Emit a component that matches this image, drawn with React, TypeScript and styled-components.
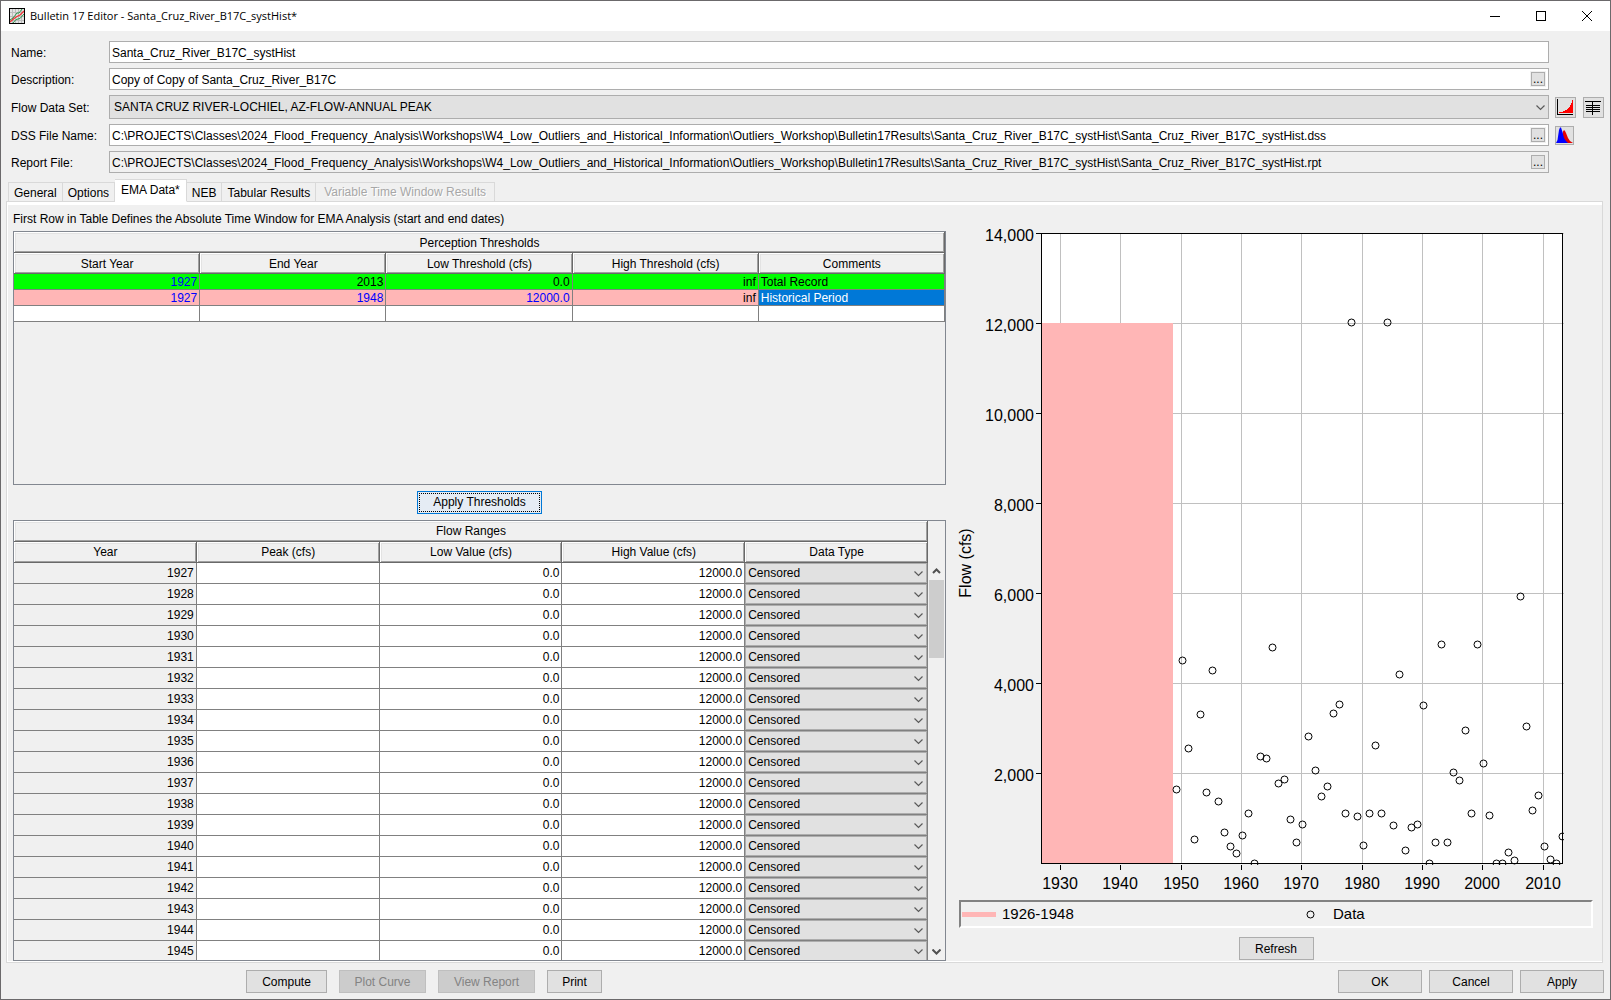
import React, { useLayoutEffect, useRef, useState } from "react";
import styled, { createGlobalStyle, css } from "styled-components";

const face = "#f0f0f0";
const edge = "#828790";
const grid = "#808080";
const btnEdge = "#adadad";
const btnFace = "#e1e1e1";
const pink = "#ffb6b6";
const sans = '"Liberation Sans", Arial, sans-serif';

const GlobalStyle = createGlobalStyle`
  * { box-sizing: border-box; }
  body { margin: 0; background: ${face}; font: 12px/16px ${sans}; color: #000; }
  button, input, select { font: inherit; color: inherit; margin: 0; border-radius: 0; }
  svg { display: block; }
`;

const Window = styled.main`
  display: flex;
  flex-direction: column;
  height: 100vh;
  min-height: 700px;
  min-width: 1100px;
  border: 1px solid #6b696b;
  background: ${face};
`;

const TitleBar = styled.header`
  display: flex;
  align-items: center;
  height: 30px;
  padding-left: 8px;
  background: #fff;
`;

const Title = styled.h1`
  flex: 1;
  margin: 0 0 0 5px;
  font: 400 11px/16px "Open Sans", "Noto Sans", sans-serif;
`;

const CaptionButton = styled.button`
  display: grid;
  place-items: center;
  width: 46px;
  height: 28px;
  padding: 0;
  border: 0;
  background: none;
`;

const Form = styled.form`
  display: flex;
  flex-direction: column;
  gap: 5px;
  padding: 10px 6px 0 10px;
`;

const FormRow = styled.div`
  display: grid;
  grid-template-columns: 98px minmax(0, 1fr) 55px;
  align-items: center;
`;

const Label = styled.label`
  padding-top: 2px;
`;

const Field = styled.div<{ $muted?: boolean }>`
  display: flex;
  align-items: center;
  height: 22px;
  padding-right: 3px;
  border: 1px solid ${btnEdge};
  background: ${(p) => (p.$muted ? face : "#fff")};
`;

const FieldInput = styled.input`
  flex: 1;
  min-width: 0;
  height: 20px;
  padding: 2px 2px 0;
  border: 0;
  outline: 0;
  background: transparent;
`;

const Browse = styled.button`
  width: 14px;
  height: 14px;
  padding: 0;
  border: 1px solid ${btnEdge};
  background: ${btnFace};
  outline: 1px solid ${face};
  line-height: 12px;
`;

const SelectBox = styled.div<{ $height: number }>`
  position: relative;
  height: ${(p) => p.$height}px;
  color: #5a5a5a;

  > svg {
    position: absolute;
    right: 4px;
    top: calc(50% - 2px);
    pointer-events: none;
  }
`;

const Select = styled.select<{ $inset: number }>`
  appearance: none;
  display: block;
  width: 100%;
  height: 100%;
  padding: 0 16px 0 ${(p) => p.$inset}px;
  border: 1px solid ${btnEdge};
  background: ${btnFace};
  color: #000;
`;

const IconRow = styled.div`
  display: flex;
  justify-content: space-between;
  align-items: center;
  padding-left: 6px;
`;

const IconButton = styled.button<{ $size: number }>`
  display: grid;
  place-items: center;
  width: ${(p) => p.$size}px;
  height: ${(p) => p.$size}px;
  padding: 0;
  border: 1px solid ${btnEdge};
  background: ${btnFace};
`;

const Tabs = styled.div`
  display: flex;
  align-items: flex-end;
  margin: 6px 0 -1px 7px;
  z-index: 1;
`;

const Tab = styled.button`
  height: 20px;
  padding: 2px 5px 0;
  border: 1px solid #d9d9d9;
  border-left-width: 0;
  background: ${face};
  line-height: 16px;

  &:first-child {
    border-left-width: 1px;
  }

  &[aria-selected="true"] {
    height: 23px;
    padding: 0 6px 2px;
    border-bottom-color: #fff;
    background: #fff;
  }

  &:disabled {
    padding: 0 8px;
    color: #a7a7a7;
    text-shadow: 1px 1px #fff;
  }
`;

const Panel = styled.section`
  flex: 1;
  min-height: 0;
  display: grid;
  grid-template-columns: minmax(0, 933fr) minmax(0, 634fr);
  grid-template-rows: minmax(0, 1fr);
  column-gap: 13px;
  margin: 0 7px 0 5px;
  padding: 8px 9px 1px 6px;
  border: 1px solid #d9d9d9;
  box-shadow: inset 0 3px #fff, inset 1px -1px #fff;
`;

const Column = styled.div`
  display: flex;
  flex-direction: column;
  min-height: 0;
`;

const Hint = styled.p`
  margin: 0;
  padding: 1px 0 4px;
  white-space: nowrap;
`;

const TableFrame = styled.div<{ $grow: number }>`
  flex: ${(p) => p.$grow} 1 0px;
  display: flex;
  min-height: 0;
  overflow: hidden;
  border: 1px solid ${edge};
`;

const TableArea = styled.div`
  flex: 1;
  min-width: 0;
`;

const Table = styled.table`
  width: 100%;
  table-layout: fixed;
  border-collapse: separate;
  border-spacing: 0;
`;

const HeadCell = styled.th`
  height: 21px;
  padding: 0;
  font-weight: 400;
  line-height: 16px;
  box-shadow: inset -1px -1px #696969, inset 1px 1px #fff, inset -2px -2px #a0a0a0, inset 2px 2px #e3e3e3;
`;

type Tone = "white" | "face" | "green" | "pink" | "selected";
const tones: Record<Tone, string> = {
  white: "#fff",
  face,
  green: "#00ff00",
  pink,
  selected: "#0078d7",
};

const Cell = styled.td<{ $tone?: Tone; $left?: boolean; $edited?: boolean; $tall?: boolean }>`
  height: ${(p) => (p.$tall ? 21 : 16)}px;
  padding: 2px 2px 0;
  border: solid ${grid};
  border-width: 0 1px 1px 0;
  background: ${(p) => tones[p.$tone ?? "white"]};
  color: ${(p) => (p.$tone === "selected" ? "#fff" : p.$edited ? "#0000ff" : "#000")};
  text-align: ${(p) => (p.$left ? "left" : "right")};
  line-height: 13px;
`;

const SelectCell = styled.td`
  height: 21px;
  padding: 0;
  border: solid ${grid};
  border-width: 0 1px 1px 0;
`;

const ScrollColumn = styled.div`
  display: flex;
  flex-direction: column;
  align-items: center;
  width: 17px;
  padding-top: 42px;
  color: #505050;
`;

const ScrollArrow = styled.button`
  display: grid;
  place-items: center;
  width: 17px;
  height: 17px;
  padding: 0;
  border: 0;
  background: ${face};
`;

const ScrollTrack = styled.div`
  flex: 1;
  width: 15px;
`;

const ScrollThumb = styled.div`
  height: 78px;
  background: #cdcdcd;
`;

const pushButton = css`
  height: 23px;
  padding: 0;
  border: 1px solid ${btnEdge};
  background: ${btnFace};
`;

const PushButton = styled.button<{ $width: number }>`
  ${pushButton}
  width: ${(p) => p.$width}px;

  &:disabled {
    border-color: #bfbfbf;
    background: #cccccc;
    color: #838383;
  }
`;

const DefaultButton = styled.button`
  ${pushButton}
  align-self: center;
  width: 125px;
  margin: 6px 0;
  border-color: #0078d7;
  background: #e5ecf4;
  outline: 1px dotted #000;
  outline-offset: -3px;
`;

const ChartArea = styled.div`
  flex: 1;
  min-height: 0;

  > svg {
    overflow: visible;
  }
`;

const Legend = styled.div`
  display: grid;
  grid-template-columns: 1fr 1fr;
  align-items: center;
  height: 28px;
  margin-bottom: 9px;
  border: 2px solid;
  border-color: #828282 #fff #fff #828282;
  font-size: 15px;
  line-height: 20px;
`;

const LegendItem = styled.div<{ $gap: number }>`
  display: flex;
  align-items: center;
  gap: ${(p) => p.$gap}px;
  padding-left: 1px;
`;

const Swatch = styled.span`
  width: 34px;
  height: 5px;
  background: ${pink};
`;

const RefreshRow = styled.div`
  display: flex;
  justify-content: center;
  padding-bottom: 1px;
`;

const Footer = styled.footer`
  display: flex;
  justify-content: space-between;
  padding: 7px 6px 6px 245px;
`;

const ButtonGroup = styled.div<{ $gap: number }>`
  display: flex;
  gap: ${(p) => p.$gap}px;
`;

const Chevron = ({ up = false, bold = false }: { up?: boolean; bold?: boolean }) => (
  <svg width="9" height="6" viewBox="0 0 9 6" fill="none" stroke="currentColor" strokeWidth={bold ? 2 : 1.2} aria-hidden="true">
    <path d={up ? "M1 5 4.500 1.500 8 5" : "M.5.5 4.500 4.500 8.500.5"} />
  </svg>
);

const AppIcon = () => (
  <svg width="16" height="16" viewBox="0 0 16 16" aria-hidden="true">
    <rect width="16" height="16" fill="#e4e4e4" />
    <path d="M3.500 1v14M6.500 1v14M9.500 1v14M12.500 1v14M1 4.500h14M1 8.500h14M1 12.500h14" stroke="#bdbdbd" fill="none" />
    <path d="M1 12 4 10 8 5 10 5 13 1M4 15 7 11.500 11 10.500 15 6" stroke="#28964b" fill="none" />
    <path d="M1 14 5 10.500 8 8.500 11 7 15 3" stroke="#f03434" strokeWidth="1.300" fill="none" />
    <rect x=".5" y=".5" width="15" height="15" fill="none" stroke="#000" />
  </svg>
);

const PlotIcon = () => (
  <svg width="19" height="19" viewBox="0 0 19 19" shapeRendering="crispEdges" aria-hidden="true">
    <path d="M3 14h4v-1h2v-1h2v-1h1v-1h1V9h1V7h1V5h1V2h1v13H3z" fill="#f00" />
    <path d="M1.500 1v15.500H17" fill="none" stroke="#000" />
  </svg>
);

const TableIcon = () => (
  <svg width="19" height="19" viewBox="0 0 19 19" shapeRendering="crispEdges" aria-hidden="true">
    <path d="M1 3.500h16M2 7.500h14M2 9.500h14M2 11.500h14M2 13.500h14M8.500 3v14" fill="none" stroke="#000" />
  </svg>
);

const HydrographIcon = () => (
  <svg width="17" height="17" viewBox="0 0 17 17" aria-hidden="true">
    <path d="M5 16 7 4.500 8 3l1 1 1 2 2 5 2 3 3 2z" fill="#e60000" />
    <path d="M0 16 1.500 13 3 3 4 .5 5 .5 6.500 5 8 11l2 3 2 2z" fill="#0000ff" />
  </svg>
);

const flows: number[] = [
  1651, 4517, 2562, 540, 3318, 1569, 4295, 1369, 695, 384, 229, 629, 1118, 0, 2384, 2340, 4806, 1784, 1873, 984, 473,
  873, 2829, 2073, 1495, 1718, 3340, 3540, 1118, 12012, 1051, 407, 1118, 2629, 1118, 12012, 851, 4206, 296, 807, 873,
  3518, 0, 473, 4873, 473, 2029, 1851, 2962, 1118, 4873, 2229, 1073, 0, 0, 251, 73, 5940, 3051, 1184, 1518, 384, 96,
  0, 607,
];
const firstYear = 1949;

function FlowChart() {
  const host = useRef<HTMLDivElement>(null);
  const [size, setSize] = useState({ w: 634, h: 690 });

  useLayoutEffect(() => {
    const el = host.current!;
    const measure = () => setSize({ w: el.clientWidth, h: el.clientHeight });
    measure();
    const observer = new ResizeObserver(measure);
    observer.observe(el);
    return () => observer.disconnect();
  }, []);

  const left = 82;
  const right = size.w - 31;
  const top = 23;
  const bottom = size.h - 37;
  const x = (year: number) => left + ((year - 1926.85) / 86.35) * (right - left);
  const y = (flow: number) => bottom - (flow / 14000) * (bottom - top);
  const snap = (v: number) => Math.round(v) + 0.5;
  const decades = [1930, 1940, 1950, 1960, 1970, 1980, 1990, 2000, 2010];
  const levels = [2000, 4000, 6000, 8000, 10000, 12000, 14000];
  const middle = (top + bottom) / 2 + 15;

  return (
    <ChartArea ref={host}>
      <svg width={size.w} height={size.h} fontFamily={sans} fontSize="16" role="img" aria-label="Annual peak flow by year">
        <clipPath id="plot">
          <rect x={left} y={top} width={right - left + 2} height={bottom - top + 2} />
        </clipPath>
        <rect x={left} y={top} width={right - left} height={bottom - top} fill="#fff" />
        {decades.map((d) => (
          <g key={d}>
            <path d={`M${snap(x(d))} ${top}V${bottom}`} stroke="#c0c0c0" />
            <path d={`M${snap(x(d))} ${bottom + 2}v5`} stroke="#000" />
            <text x={Math.round(x(d))} y={bottom + 26} textAnchor="middle">{d}</text>
          </g>
        ))}
        {levels.map((l) => (
          <g key={l}>
            <path d={`M${left} ${snap(y(l))}H${right + 2}`} stroke="#c0c0c0" />
            <path d={`M${left - 5} ${snap(y(l))}h5`} stroke="#000" />
            <text x={left - 7} y={Math.round(y(l)) + 8} textAnchor="end">{l.toLocaleString("en-US")}</text>
          </g>
        ))}
        <rect x={left} y={Math.round(y(12000))} width={Math.round(x(1948.65)) - left} height={bottom - Math.round(y(12000))} fill={pink} />
        <rect x={left + 0.5} y={top + 0.5} width={right - left} height={bottom - top} fill="none" stroke="#000" />
        <g clipPath="url(#plot)" fill="none" stroke="#000">
          {flows.map((f, i) => (
            <circle key={i} cx={snap(x(firstYear + i + 0.18))} cy={snap(y(f))} r="3.500" />
          ))}
        </g>
        <text transform={`translate(12 ${middle}) rotate(-90)`} textAnchor="middle">Flow (cfs)</text>
      </svg>
    </ChartArea>
  );
}

const years = Array.from({ length: 19 }, (_, i) => 1927 + i);

export default function App() {
  return (
    <>
      <GlobalStyle />
      <Window>
        <TitleBar>
          <AppIcon />
          <Title>Bulletin 17 Editor - Santa_Cruz_River_B17C_systHist*</Title>
          <CaptionButton aria-label="Minimize">
            <svg width="10" height="10"><path d="M0 5.500h10" stroke="#000" /></svg>
          </CaptionButton>
          <CaptionButton aria-label="Maximize">
            <svg width="10" height="10"><rect x=".5" y=".5" width="9" height="9" fill="none" stroke="#000" /></svg>
          </CaptionButton>
          <CaptionButton aria-label="Close">
            <svg width="10" height="10"><path d="M0 0 10 10M10 0 0 10" stroke="#000" /></svg>
          </CaptionButton>
        </TitleBar>

        <Form onSubmit={(e) => e.preventDefault()}>
          <FormRow>
            <Label htmlFor="name">Name:</Label>
            <Field><FieldInput id="name" defaultValue="Santa_Cruz_River_B17C_systHist" /></Field>
          </FormRow>
          <FormRow>
            <Label htmlFor="description">Description:</Label>
            <Field>
              <FieldInput id="description" defaultValue="Copy of Copy of Santa_Cruz_River_B17C" />
              <Browse type="button" aria-label="Edit description">...</Browse>
            </Field>
          </FormRow>
          <FormRow>
            <Label htmlFor="dataset">Flow Data Set:</Label>
            <SelectBox $height={24}>
              <Select id="dataset" $inset={4}>
                <option>SANTA CRUZ RIVER-LOCHIEL, AZ-FLOW-ANNUAL PEAK</option>
              </Select>
              <Chevron />
            </SelectBox>
            <IconRow>
              <IconButton type="button" $size={21} aria-label="Plot data set"><PlotIcon /></IconButton>
              <IconButton type="button" $size={21} aria-label="Tabulate data set"><TableIcon /></IconButton>
            </IconRow>
          </FormRow>
          <FormRow>
            <Label htmlFor="dss">DSS File Name:</Label>
            <Field>
              <FieldInput
                id="dss"
                defaultValue="C:\PROJECTS\Classes\2024_Flood_Frequency_Analysis\Workshops\W4_Low_Outliers_and_Historical_Information\Outliers_Workshop\Bulletin17Results\Santa_Cruz_River_B17C_systHist\Santa_Cruz_River_B17C_systHist.dss"
              />
              <Browse type="button" aria-label="Browse DSS file">...</Browse>
            </Field>
            <IconRow>
              <IconButton type="button" $size={19} aria-label="Plot results"><HydrographIcon /></IconButton>
            </IconRow>
          </FormRow>
          <FormRow>
            <Label htmlFor="report">Report File:</Label>
            <Field $muted>
              <FieldInput
                id="report"
                readOnly
                defaultValue="C:\PROJECTS\Classes\2024_Flood_Frequency_Analysis\Workshops\W4_Low_Outliers_and_Historical_Information\Outliers_Workshop\Bulletin17Results\Santa_Cruz_River_B17C_systHist\Santa_Cruz_River_B17C_systHist.rpt"
              />
              <Browse type="button" aria-label="Browse report file">...</Browse>
            </Field>
          </FormRow>
        </Form>

        <Tabs role="tablist">
          <Tab role="tab" aria-selected="false">General</Tab>
          <Tab role="tab" aria-selected="false">Options</Tab>
          <Tab role="tab" aria-selected="true">EMA Data*</Tab>
          <Tab role="tab" aria-selected="false">NEB</Tab>
          <Tab role="tab" aria-selected="false">Tabular Results</Tab>
          <Tab role="tab" aria-selected="false" disabled>Variable Time Window Results</Tab>
        </Tabs>

        <Panel role="tabpanel">
          <Column>
            <Hint>First Row in Table Defines the Absolute Time Window for EMA Analysis (start and end dates)</Hint>
            <TableFrame $grow={253}>
              <TableArea>
                <Table>
                  <thead>
                    <tr><HeadCell colSpan={5}>Perception Thresholds</HeadCell></tr>
                    <tr>
                      <HeadCell>Start Year</HeadCell>
                      <HeadCell>End Year</HeadCell>
                      <HeadCell>Low Threshold (cfs)</HeadCell>
                      <HeadCell>High Threshold (cfs)</HeadCell>
                      <HeadCell>Comments</HeadCell>
                    </tr>
                  </thead>
                  <tbody>
                    <tr>
                      <Cell $tone="green" $edited>1927</Cell>
                      <Cell $tone="green">2013</Cell>
                      <Cell $tone="green">0.0</Cell>
                      <Cell $tone="green">inf</Cell>
                      <Cell $tone="green" $left>Total Record</Cell>
                    </tr>
                    <tr>
                      <Cell $tone="pink" $edited>1927</Cell>
                      <Cell $tone="pink" $edited>1948</Cell>
                      <Cell $tone="pink" $edited>12000.0</Cell>
                      <Cell $tone="pink">inf</Cell>
                      <Cell $tone="selected" $left>Historical Period</Cell>
                    </tr>
                    <tr>
                      <Cell /><Cell /><Cell /><Cell /><Cell />
                    </tr>
                  </tbody>
                </Table>
              </TableArea>
            </TableFrame>
            <DefaultButton type="button">Apply Thresholds</DefaultButton>
            <TableFrame $grow={442}>
              <TableArea>
                <Table>
                  <thead>
                    <tr><HeadCell colSpan={5}>Flow Ranges</HeadCell></tr>
                    <tr>
                      <HeadCell>Year</HeadCell>
                      <HeadCell>Peak (cfs)</HeadCell>
                      <HeadCell>Low Value (cfs)</HeadCell>
                      <HeadCell>High Value (cfs)</HeadCell>
                      <HeadCell>Data Type</HeadCell>
                    </tr>
                  </thead>
                  <tbody>
                    {years.map((year) => (
                      <tr key={year}>
                        <Cell $tall $tone="face">{year}</Cell>
                        <Cell $tall />
                        <Cell $tall>0.0</Cell>
                        <Cell $tall>12000.0</Cell>
                        <SelectCell>
                          <SelectBox $height={20}>
                            <Select $inset={2} aria-label={`Data type for ${year}`}>
                              <option>Censored</option>
                            </Select>
                            <Chevron />
                          </SelectBox>
                        </SelectCell>
                      </tr>
                    ))}
                  </tbody>
                </Table>
              </TableArea>
              <ScrollColumn>
                <ScrollArrow type="button" aria-label="Scroll up"><Chevron up bold /></ScrollArrow>
                <ScrollTrack><ScrollThumb /></ScrollTrack>
                <ScrollArrow type="button" aria-label="Scroll down"><Chevron bold /></ScrollArrow>
              </ScrollColumn>
            </TableFrame>
          </Column>

          <Column>
            <FlowChart />
            <Legend>
              <LegendItem $gap={6}><Swatch />1926-1948</LegendItem>
              <LegendItem $gap={16}>
                <svg width="40" height="9" viewBox="-29 0 40 9" aria-hidden="true">
                  <circle cx="4.500" cy="4.500" r="3.500" fill="none" stroke="#000" />
                </svg>
                Data
              </LegendItem>
            </Legend>
            <RefreshRow><PushButton type="button" $width={75}>Refresh</PushButton></RefreshRow>
          </Column>
        </Panel>

        <Footer>
          <ButtonGroup $gap={12}>
            <PushButton type="button" $width={81}>Compute</PushButton>
            <PushButton type="button" $width={87} disabled>Plot Curve</PushButton>
            <PushButton type="button" $width={97} disabled>View Report</PushButton>
            <PushButton type="button" $width={55}>Print</PushButton>
          </ButtonGroup>
          <ButtonGroup $gap={7}>
            <PushButton type="button" $width={84}>OK</PushButton>
            <PushButton type="button" $width={84}>Cancel</PushButton>
            <PushButton type="button" $width={84}>Apply</PushButton>
          </ButtonGroup>
        </Footer>
      </Window>
    </>
  );
}
